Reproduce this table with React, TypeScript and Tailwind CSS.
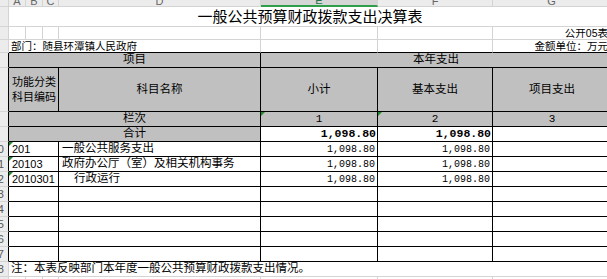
import * as React from "react";

/* Spreadsheet view: 一般公共预算财政拨款支出决算表 (公开05表) */

const GL = "border-[#d4d4d4]"; // light gridline
const BK = "border-black"; // table border
const HEAD = "bg-[#c0c0c0]";
const NUM = "font-['Liberation_Mono','Noto_Sans_CJK_SC',monospace]";

const ROWS = [
  { code: "201", name: "一般公共服务支出", indent: false, total: "1,098.80", basic: "1,098.80" },
  { code: "20103", name: "政府办公厅（室）及相关机构事务", indent: false, total: "1,098.80", basic: "1,098.80" },
  { code: "2010301", name: "行政运行", indent: true, total: "1,098.80", basic: "1,098.80" },
  { code: "", name: "", indent: false, total: "", basic: "" },
  { code: "", name: "", indent: false, total: "", basic: "" },
  { code: "", name: "", indent: false, total: "", basic: "" },
  { code: "", name: "", indent: false, total: "", basic: "" },
  { code: "", name: "", indent: false, total: "", basic: "" },
];

const COLS = ["A", "B", "C", "D", "E", "F", "G"];

function Flag() {
  return (
    <span className="absolute left-0 top-0 h-0 w-0 border-t-[4px] border-r-[4px] border-t-[#1f8a2e] border-r-transparent" />
  );
}

function RowHead({ n, dark }: { n?: number; dark?: boolean }) {
  return (
    <div
      className={`flex items-center justify-end overflow-hidden border-b border-r ${GL} ${
        dark ? "border-r-black" : ""
      } bg-[#ececec] pr-[4px] text-[11px] text-[#555]`}
    >
      {n ? <span className="shrink-0">{n}</span> : null}
    </div>
  );
}

export default function App() {
  return (
    <div className="h-[279px] w-[607px] overflow-hidden bg-white font-['Liberation_Sans','Noto_Sans_CJK_SC',sans-serif] text-black">
      <div className="grid w-[611px] grid-cols-[9px_17px_17px_16px_202px_117px_115px_118px] grid-rows-[7px_20px_13px_13px_15px_44px_15px_15px_15px_15px_15px_15px_15px_15px_15px_15px_15px_15px]">
        {/* column letters */}
        <div className={`border-b border-r ${GL} bg-[#ececec]`} />
        {COLS.map((c) => (
          <div
            key={c}
            className={`flex items-end justify-center overflow-hidden border-r ${GL} text-[11px] leading-[9px] ${
              c === "E"
                ? "border-b-2 border-b-[#2e9e49] bg-[#d6d6d6] text-[#217346]"
                : "border-b bg-[#ececec] text-[#666]"
            }`}
          >
            {c}
          </div>
        ))}

        {/* title */}
        <RowHead />
        <div className={`col-span-7 flex items-center justify-center border-b ${GL} pt-[2px] text-[15px]`}>
          一般公共预算财政拨款支出决算表
        </div>

        {/* table no. */}
        <RowHead />
        {["A", "B", "C", "D", "E", "F"].map((c) => (
          <div key={c} className={`border-b border-r ${GL}`} />
        ))}
        <div className={`flex items-end justify-end whitespace-nowrap border-b ${GL} pr-[3px] text-[10.5px] leading-[12px]`}>
          公开05表
        </div>

        {/* department / unit */}
        <RowHead />
        <div className={`col-span-4 flex items-end whitespace-nowrap border-b border-r ${GL} border-b-black pl-[2px] text-[10.5px] leading-[12px]`}>
          部门：随县环潭镇人民政府
        </div>
        <div className={`border-b border-r ${GL} border-b-black`} />
        <div className={`border-b border-r ${GL} border-b-black`} />
        <div className="flex items-end justify-end whitespace-nowrap border-b border-black pr-[3px] text-[10.5px] leading-[12px]">
          金额单位：万元
        </div>

        {/* header row 1 */}
        <RowHead dark />
        <div className={`col-span-4 flex items-center justify-center border-b border-r ${BK} ${HEAD} text-[11.5px]`}>
          项目
        </div>
        <div className={`col-span-3 flex items-center justify-center border-b ${BK} ${HEAD} text-[11.5px]`}>
          本年支出
        </div>

        {/* header row 2 */}
        <RowHead dark />
        <div className={`col-span-3 flex items-center border-b border-r ${BK} ${HEAD} pl-[3px] text-[11px] leading-[15px]`}>
          功能分类
          <br />
          科目编码
        </div>
        <div className={`flex items-center justify-center border-b border-r ${BK} ${HEAD} text-[11.5px]`}>
          科目名称
        </div>
        <div className={`flex items-center justify-center border-b border-r ${BK} ${HEAD} text-[11.5px]`}>
          小计
        </div>
        <div className={`flex items-center justify-center border-b border-r ${BK} ${HEAD} text-[11.5px]`}>
          基本支出
        </div>
        <div className={`flex items-center justify-center border-b ${BK} ${HEAD} text-[11.5px]`}>
          项目支出
        </div>

        {/* 栏次 */}
        <RowHead dark />
        <div className={`col-span-4 flex items-center justify-center border-b border-r ${BK} ${HEAD} text-[11.5px]`}>
          栏次
        </div>
        <div className={`relative flex items-center justify-center border-b border-r ${BK} ${HEAD} ${NUM} text-[11px]`}>
          <Flag />1
        </div>
        <div className={`relative flex items-center justify-center border-b border-r ${BK} ${HEAD} ${NUM} text-[11px]`}>
          <Flag />2
        </div>
        <div className={`flex items-center justify-center border-b ${BK} ${HEAD} ${NUM} text-[11px]`}>3</div>

        {/* 合计 */}
        <RowHead dark />
        <div className={`col-span-4 flex items-center justify-center border-b border-r ${BK} ${HEAD} text-[11.5px]`}>
          合计
        </div>
        <div className={`flex items-center justify-end border-b border-r ${BK} ${NUM} pr-[1px] text-[11.5px] font-bold`}>
          1,098.80
        </div>
        <div className={`flex items-center justify-end border-b border-r ${BK} ${NUM} pr-[1px] text-[11.5px] font-bold`}>
          1,098.80
        </div>
        <div className={`border-b ${BK}`} />

        {/* data rows */}
        {ROWS.map((r, i) => (
          <React.Fragment key={i}>
            <RowHead n={10 + i} dark />
            <div className={`relative col-span-3 flex items-center whitespace-nowrap border-b border-r ${BK} pl-[3px] text-[11px]`}>
              {r.code && <Flag />}
              {r.code}
            </div>
            <div className={`flex items-center whitespace-nowrap border-b border-r ${BK} ${r.indent ? "pl-[15px]" : "pl-[3px]"} text-[11.5px]`}>
              {r.name}
            </div>
            <div className={`flex items-center justify-end whitespace-nowrap border-b border-r ${BK} ${NUM} pr-[2px] text-[10px]`}>
              {r.total}
            </div>
            <div className={`flex items-center justify-end whitespace-nowrap border-b border-r ${BK} ${NUM} pr-[2px] text-[10px]`}>
              {r.basic}
            </div>
            <div className={`border-b ${BK}`} />
          </React.Fragment>
        ))}

        {/* note */}
        <RowHead n={18} />
        <div className={`col-span-7 flex items-center whitespace-nowrap border-b ${GL} pl-[2px] text-[11.5px]`}>
          注：本表反映部门本年度一般公共预算财政拨款支出情况。
        </div>

        {/* next empty row */}
        <RowHead n={19} />
        {COLS.map((c) => (
          <div key={c} className={`border-b border-r ${GL}`} />
        ))}
      </div>
    </div>
  );
}
